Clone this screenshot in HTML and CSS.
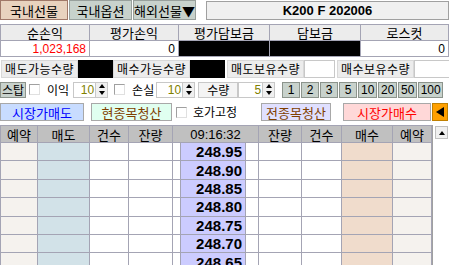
FILE: index.html
```html
<!DOCTYPE html>
<html>
<head>
    <title>주문</title>
    <meta charset="utf-8">
    <link rel="stylesheet" href="styles.css">
</head>
<body>
    <div class="tabs">
        <div class="tab on">국내선물</div>
        <div class="tab">국내옵션</div>
        <div class="tab">해외선물▼</div>
        <div class="title">K200 F 202006</div>
    </div>

    <table class="summary">
        <tr>
            <th class="c1">순손익</th>
            <th class="c2">평가손익</th>
            <th class="c3">평가담보금</th>
            <th class="c4">담보금</th>
            <th class="c5">로스컷</th>
        </tr>
        <tr>
            <td class="red">1,023,168</td>
            <td>0</td>
            <td class="mask"></td>
            <td class="mask"></td>
            <td>0</td>
        </tr>
    </table>

    <div class="qty-row">
        <div class="label">매도가능수량</div>
        <div class="mask-box"></div>
        <div class="label">매수가능수량</div>
        <div class="mask-box"></div>
        <div class="label gap">매도보유수량</div>
        <div class="blank-box"></div>
        <div class="label">매수보유수량</div>
        <div class="blank-box last"></div>
    </div>

    <div class="stop-row">
        <div class="btn stop">스탑</div>
        <span class="check"></span>
        <span class="txt">이익</span>
        <div class="spin first">
            <div class="spin-val">10</div>
            <div class="spin-arr"><i class="up"></i><i class="down"></i></div>
        </div>
        <span class="check second"></span>
        <span class="txt">손실</span>
        <div class="spin second">
            <div class="spin-val">10</div>
            <div class="spin-arr"><i class="up"></i><i class="down"></i></div>
        </div>
        <div class="btn qty">수량</div>
        <div class="spin third">
            <div class="spin-val">5</div>
            <div class="spin-arr"><i class="up"></i><i class="down"></i></div>
        </div>
        <div class="nums">
            <div class="btn num">1</div>
            <div class="btn num">2</div>
            <div class="btn num">3</div>
            <div class="btn num">5</div>
            <div class="btn num two">10</div>
            <div class="btn num two">20</div>
            <div class="btn num two">50</div>
            <div class="btn num wide">100</div>
        </div>
    </div>

    <div class="action-row">
        <div class="act sell">시장가매도</div>
        <div class="act clear-one">현종목청산</div>
        <span class="check fixbox"></span>
        <span class="txt fix">호가고정</span>
        <div class="act clear-all">전종목청산</div>
        <div class="act buy">시장가매수</div>
        <div class="act arrow"><i class="left"></i></div>
    </div>

    <div class="book">
        <table class="hoga">
            <colgroup>
                <col style="width:37px"><col style="width:52px"><col style="width:39px"><col style="width:44px">
                <col style="width:8px"><col style="width:65px"><col style="width:13px">
                <col style="width:43px"><col style="width:40px"><col style="width:51px"><col style="width:39px">
            </colgroup>
            <tr class="head">
                <th>예약</th><th>매도</th><th>건수</th><th>잔량</th>
                <th colspan="3" class="time">09:16:32</th>
                <th>잔량</th><th>건수</th><th>매수</th><th>예약</th>
            </tr>
            <tbody id="rows"></tbody>
        </table>
        <div class="scroll">
            <div class="scroll-up"><i class="up"></i></div>
        </div>
    </div>

    <script>
        var prices = ["248.95", "248.90", "248.85", "248.80", "248.75", "248.70", "248.65"];
        var rows = document.getElementById("rows");
        for (var i = 0; i < prices.length; i++) {
            var tr = document.createElement("tr");
            tr.innerHTML =
                '<td class="rsv"></td><td class="ask"></td><td></td><td></td>' +
                '<td></td><td class="price">' + prices[i] + '</td><td></td>' +
                '<td></td><td></td><td class="bid"></td><td class="rsv"></td>';
            rows.appendChild(tr);
        }
    </script>
</body>
</html>
```

FILE: styles.css
```css
body {
    margin: 0;
    padding: 0;
    width: 449px;
    height: 265px;
    overflow: hidden;
    background-color: #ffffff;
    font-family: "Noto Sans CJK KR", sans-serif;
    font-size: 12px;
    color: #000000;
    white-space: nowrap;
}

/* small triangles */
.up,
.down,
.left {
    display: block;
    width: 0;
    height: 0;
    border-style: solid;
    border-color: transparent;
}

.up {
    border-width: 0 3px 4px 3px;
    border-bottom-color: #000000;
}

.down {
    border-width: 4px 3px 0 3px;
    border-top-color: #000000;
}

.left {
    border-width: 5px 8px 5px 0;
    border-right-color: #000000;
}

/* top tabs */
.tabs {
    display: flex;
    height: 21px;
}

.tab {
    box-sizing: border-box;
    flex-shrink: 0;
    width: 63px;
    height: 20px;
    margin-right: 1px;
    border: 1px solid #98a09c;
    background-color: #c8d2cc;
    display: flex;
    align-items: center;
    justify-content: center;
    font-size: 13px;
    line-height: 1;
}

.tab.on {
    width: 68px;
    background-color: #e8d2be;
    border-color: #a07868;
}

.title {
    box-sizing: border-box;
    flex: 1;
    height: 19px;
    margin-top: 1px;
    margin-left: 9px;
    border: 1px solid #a0a0a0;
    background-color: #f0f0f0;
    font-family: "Liberation Sans", Arial, sans-serif;
    font-weight: bold;
    font-size: 13px;
    display: flex;
    align-items: center;
    justify-content: center;
}

/* summary */
.summary {
    margin-top: 3px;
    border-collapse: collapse;
    table-layout: fixed;
    width: 449px;
}

.summary th,
.summary td {
    border: 1px solid #a4a4b4;
    height: 15px;
    padding: 0 3px;
    line-height: 1;
}

.summary th {
    background-color: #ececec;
    font-weight: normal;
    font-size: 13px;
    text-align: center;
}

.summary td {
    text-align: right;
    font-family: "Liberation Sans", Arial, sans-serif;
    font-size: 12px;
}

.c1 { width: 82px; }
.c2 { width: 82px; }
.c3 { width: 84px; }
.c4 { width: 84px; }

.summary .red {
    color: #ff0000;
}

.summary .mask {
    background-color: #000000;
}

/* qty row */
.qty-row {
    display: flex;
    margin-top: 3px;
    margin-left: 1px;
    height: 18px;
}

.label {
    box-sizing: border-box;
    flex-shrink: 0;
    width: 77px;
    height: 18px;
    border: 1px solid #d8d8d8;
    background-color: #ececec;
    display: flex;
    align-items: center;
    justify-content: center;
    letter-spacing: 0.5px;
    line-height: 1;
}

.label.gap {
    margin-left: 2px;
}

.mask-box {
    flex-shrink: 0;
    width: 35px;
    height: 18px;
    background-color: #000000;
}

.blank-box {
    box-sizing: border-box;
    flex-shrink: 0;
    width: 31px;
    height: 18px;
    margin-right: 2px;
    border: 1px solid #c8c8c8;
    background-color: #ffffff;
}

.blank-box.last {
    width: 36px;
}

/* stop row */
.stop-row {
    display: flex;
    align-items: center;
    margin-top: 3px;
    height: 17px;
}

.btn {
    box-sizing: border-box;
    flex-shrink: 0;
    height: 16px;
    border: 1px solid #8c948c;
    background-color: #c8d2cc;
    display: flex;
    align-items: center;
    justify-content: center;
    line-height: 1;
}

.btn.stop {
    width: 26px;
}

.btn.qty {
    width: 40px;
    margin-left: 3px;
    background-color: #f4f4f4;
    border-color: #c8c8c8;
}

.check {
    box-sizing: border-box;
    flex-shrink: 0;
    display: inline-block;
    width: 11px;
    height: 11px;
    border: 1px solid #a0a0a0;
    border-right-color: #e0e0e0;
    border-bottom-color: #e0e0e0;
    background-color: #ffffff;
    margin-left: 3px;
}

.check.second {
    margin-left: 6px;
}

.txt {
    flex-shrink: 0;
    margin-left: 7px;
    line-height: 1;
}

.spin {
    display: flex;
    flex-shrink: 0;
    margin-left: 4px;
    height: 16px;
}

.spin.second {
    margin-left: 2px;
}

.spin.third {
    margin-left: 0;
}

.spin-val {
    box-sizing: border-box;
    width: 23px;
    height: 16px;
    border: 1px solid #c8c8c8;
    text-align: right;
    color: #808000;
    font-family: "Liberation Sans", Arial, sans-serif;
    font-size: 12px;
    line-height: 14px;
    padding-right: 1px;
}

.spin.second .spin-val {
    width: 27px;
}

.spin.third .spin-val {
    width: 25px;
}

.spin-arr {
    box-sizing: border-box;
    width: 12px;
    height: 16px;
    border: 1px solid #c8c8c8;
    border-left: none;
    background-color: #f0f0f0;
    display: flex;
    flex-direction: column;
    align-items: center;
    justify-content: space-around;
}

.nums {
    display: flex;
    margin-left: 7px;
}

.btn.num {
    width: 18px;
    margin-right: 1px;
    font-family: "Liberation Sans", Arial, sans-serif;
    font-size: 12px;
}

.btn.num.two {
    width: 19px;
}

.btn.num.wide {
    width: 25px;
    margin-right: 0;
}

/* action row */
.action-row {
    display: flex;
    align-items: center;
    margin-top: 5px;
    height: 18px;
}

.act {
    box-sizing: border-box;
    flex-shrink: 0;
    height: 18px;
    border: 1px solid #a8a8a8;
    display: flex;
    align-items: center;
    justify-content: center;
    font-size: 13px;
    line-height: 1;
}

.act.sell {
    width: 84px;
    background-color: #c8dcff;
    color: #0000ff;
}

.act.clear-one {
    width: 81px;
    margin-left: 7px;
    background-color: #e0fff0;
    color: #804000;
}

.check.fixbox {
    margin-left: 4px;
}

.txt.fix {
    width: 48px;
    margin-left: 6px;
    font-size: 12px;
}

.act.clear-all {
    width: 70px;
    margin-left: 20px;
    background-color: #e0e0ff;
    color: #804000;
}

.act.buy {
    width: 88px;
    margin-left: 12px;
    background-color: #ffd8d8;
    color: #ff0000;
}

.act.arrow {
    width: 16px;
    margin-left: 1px;
    background-color: #ffa000;
    border-color: #c08000;
}

/* hoga table */
.book {
    display: flex;
    margin-top: 4px;
}

.hoga {
    flex-shrink: 0;
    border-collapse: collapse;
    table-layout: fixed;
    width: 432px;
}

.hoga th,
.hoga td {
    border: 1px solid #a4a4b4;
    padding: 0;
}

.hoga .head th {
    height: 16px;
    background-color: #c0c0c0;
    font-weight: normal;
    font-size: 13px;
    line-height: 1;
    text-align: center;
}

.hoga .head .time {
    font-family: "Liberation Sans", Arial, sans-serif;
}

.hoga td {
    height: 17.4px;
}

.hoga .rsv {
    background-color: #f5f2ee;
}

.hoga .ask {
    background-color: #d2e2e8;
}

.hoga .bid {
    background-color: #f0dccc;
}

.hoga .price {
    background-color: #ccccff;
    text-align: right;
    padding-right: 3px;
    font-family: "Liberation Sans", Arial, sans-serif;
    font-weight: bold;
    font-size: 15px;
    line-height: 1;
}

.scroll {
    box-sizing: border-box;
    width: 17px;
    border-left: 1px solid #a0a0a0;
    padding: 1px 2px;
}

.scroll-up {
    box-sizing: border-box;
    width: 13px;
    height: 13px;
    border: 1px solid #c0c0c0;
    background-color: #f0f0f0;
    display: flex;
    align-items: center;
    justify-content: center;
}
```
